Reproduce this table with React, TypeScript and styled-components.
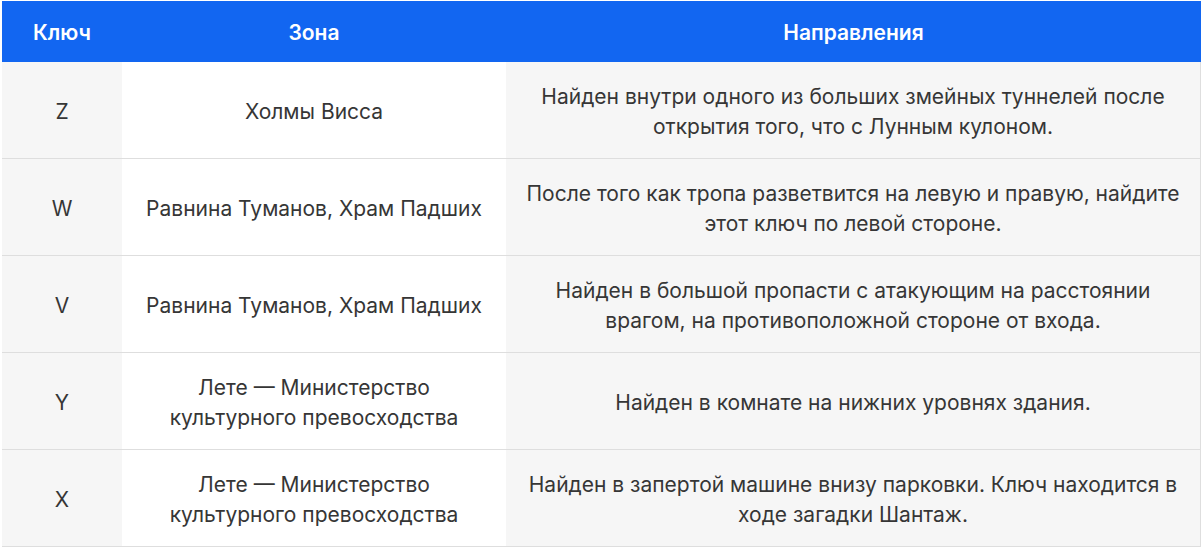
import React from 'react'
import styled, { createGlobalStyle } from 'styled-components'

const GlobalStyle = createGlobalStyle`
    html, body {
        margin: 0;
        padding: 0;
        background: #ffffff;
    }
    body {
        font-family: Inter, "Noto Sans", sans-serif;
        color: #363636;
    }
`

const Wrapper = styled.div`
    padding: 1px 2px 0 2px;
    width: 1199px;
`

const Row = styled.div`
    display: grid;
    grid-template-columns: 120px 384px 1fr;
`

const HeadRow = styled(Row)`
    background: #1266f1;
    height: 61px;
`

const HeadCell = styled.div`
    display: flex;
    align-items: center;
    justify-content: center;
    padding-top: 2px;
    color: #ffffff;
    font-weight: 600;
    font-size: 21px;
`

const BodyRow = styled(Row)`
    height: 97px;
    box-sizing: border-box;
    border-bottom: 1px solid #dedede;
`

const Cell = styled.div<{ $shaded?: boolean; $last?: boolean }>`
    display: flex;
    flex-direction: column;
    align-items: center;
    justify-content: center;
    padding-top: 4px;
    text-align: center;
    font-size: 21px;
    line-height: 30px;
    white-space: nowrap;
    background: ${p => (p.$shaded ? '#f6f6f6' : '#ffffff')};
    border-right: ${p => (p.$last ? '1px solid #dedede' : 'none')};
`

const Line = styled.span`
    display: block;
`

const rows = [
    {
        key: 'Z',
        zone: ['Холмы Висса'],
        dir: ['Найден внутри одного из больших змейных туннелей после', 'открытия того, что с Лунным кулоном.'],
    },
    {
        key: 'W',
        zone: ['Равнина Туманов, Храм Падших'],
        dir: ['После того как тропа разветвится на левую и правую, найдите', 'этот ключ по левой стороне.'],
    },
    {
        key: 'V',
        zone: ['Равнина Туманов, Храм Падших'],
        dir: ['Найден в большой пропасти с атакующим на расстоянии', 'врагом, на противоположной стороне от входа.'],
    },
    {
        key: 'Y',
        zone: ['Лете — Министерство', 'культурного превосходства'],
        dir: ['Найден в комнате на нижних уровнях здания.'],
    },
    {
        key: 'X',
        zone: ['Лете — Министерство', 'культурного превосходства'],
        dir: ['Найден в запертой машине внизу парковки. Ключ находится в', 'ходе загадки Шантаж.'],
    },
]

export default function App() {
    return (
        <>
            <GlobalStyle />
            <Wrapper>
                <HeadRow>
                    <HeadCell>Ключ</HeadCell>
                    <HeadCell>Зона</HeadCell>
                    <HeadCell>Направления</HeadCell>
                </HeadRow>
                {rows.map(item => (
                    <BodyRow key={item.key}>
                        <Cell $shaded>{item.key}</Cell>
                        <Cell>
                            {item.zone.map(line => <Line key={line}>{line}</Line>)}
                        </Cell>
                        <Cell $shaded $last>
                            {item.dir.map(line => <Line key={line}>{line}</Line>)}
                        </Cell>
                    </BodyRow>
                ))}
            </Wrapper>
        </>
    )
}
